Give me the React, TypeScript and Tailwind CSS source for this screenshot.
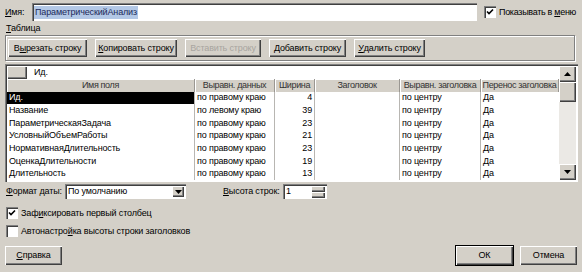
import React from "react";

const raised =
  "bg-[#d4d0c8] shadow-[inset_1px_1px_#ffffff,inset_-1px_-1px_#404040,inset_-2px_-2px_#808080]";
const sunken =
  "shadow-[inset_1px_1px_#808080,inset_2px_2px_#404040,inset_-1px_-1px_#ffffff]";

type Row = {
  name: string;
  align: string;
  width: number;
};

const rows: Row[] = [
  { name: "Ид.", align: "по правому краю", width: 4 },
  { name: "Название", align: "по левому краю", width: 39 },
  { name: "ПараметрическаяЗадача", align: "по правому краю", width: 23 },
  { name: "УсловныйОбъемРаботы", align: "по правому краю", width: 21 },
  { name: "НормативнаяДлительность", align: "по правому краю", width: 23 },
  { name: "ОценкаДлительности", align: "по правому краю", width: 19 },
  { name: "Длительность", align: "по правому краю", width: 13 },
];

function Btn({
  w,
  children,
  disabled,
  def,
  h = "h-[18px]",
}: {
  w: string;
  children: React.ReactNode;
  disabled?: boolean;
  def?: boolean;
  h?: string;
}) {
  return (
    <div
      className={`${w} ${h} ${raised} flex items-center justify-center ${
        disabled ? "text-[#a8a5a0]" : "text-black"
      } ${def ? "outline outline-1 outline-black" : ""}`}
    >
      {children}
    </div>
  );
}

function Check({ checked }: { checked?: boolean }) {
  return (
    <div className={`w-[12px] h-[12px] bg-white ${sunken} flex items-center justify-center`}>
      {checked && (
        <svg width="8" height="8" viewBox="0 0 8 8">
          <path d="M1 3.5 L3 5.5 L7 1.5" stroke="#000" strokeWidth="1.6" fill="none" />
        </svg>
      )}
    </div>
  );
}

function Arrow({ up }: { up?: boolean }) {
  return (
    <svg width="7" height="4" viewBox="0 0 7 4">
      <path d={up ? "M0 4 L3.5 0 L7 4 Z" : "M0 0 L3.5 4 L7 0 Z"} fill="#000" />
    </svg>
  );
}

const cols = "grid grid-cols-[188px_80px_40px_85px_81px_78px]";

export default function App() {
  return (
    <div
      className="w-[582px] h-[272px] bg-[#d4d0c8] text-[9px] tracking-[-0.15px] text-black overflow-hidden flex flex-col leading-none whitespace-nowrap"
      style={{ fontFamily: '"Liberation Sans", Arial, sans-serif' }}
    >
      {/* name row */}
      <div className="flex items-center h-[18px] mt-[3px] pl-[5px]">
        <span className="w-[27px]">
          <u>И</u>мя:
        </span>
        <div className={`w-[445px] h-[18px] bg-white ${sunken} flex items-center pl-[2px]`}>
          <span className="bg-[#b3c8e6] text-[#1c2a5a] px-[1px] py-[2px]">ПараметрическийАнализ</span>
        </div>
        <div className="flex items-center ml-[7px] gap-[3px]">
          <Check checked />
          <span className="tracking-[-0.3px]">
            Показывать в <u>м</u>еню
          </span>
        </div>
      </div>

      <div className="pl-[6px] mt-[2px] h-[10px] flex items-center">
        <span>
          <u>Т</u>аблица
        </span>
      </div>

      {/* toolbar group */}
      <div className="mx-[5px] w-[570px] mt-[2px] h-[26px] border border-[#808080] shadow-[1px_1px_#ffffff,inset_1px_1px_#ffffff] flex items-center pl-[2px] gap-[8px]">
        <Btn w="w-[79px]">
          В<u>ы</u>резать строку
        </Btn>
        <Btn w="w-[82px]">
          <u>К</u>опировать строку
        </Btn>
        <Btn w="w-[76px]" disabled>
          Вставить строку
        </Btn>
        <Btn w="w-[77px]">
          <u>Д</u>обавить строку
        </Btn>
        <Btn w="w-[71px]">
          <u>У</u>далить строку
        </Btn>
      </div>

      {/* grid */}
      <div className={`mx-[5px] mt-[3px] w-[573px] h-[118px] bg-white ${sunken} p-[2px] flex`}>
        <div className="flex flex-col w-[552px]">
          <div className="flex h-[13px] items-center">
            <div className={`w-[20px] h-[13px] ${raised}`} />
            <div className="pl-[7px]">Ид.</div>
          </div>
          <div className={`${cols} h-[13px]`}>
            {["Имя поля", "Выравн. данных", "Ширина", "Заголовок", "Выравн. заголовка", "Перенос заголовка"].map(
              (h) => (
                <div
                  key={h}
                  className="bg-[#d4d0c8] border-r border-[#9a9792] shadow-[inset_1px_1px_#ffffff] flex items-center justify-center text-[#333] tracking-[-0.35px] overflow-hidden"
                >
                  {h}
                </div>
              )
            )}
          </div>
          {rows.map((r, i) => (
            <div key={r.name} className={`${cols} h-[13px]`}>
              <div
                className={`pl-[2px] flex items-center border-r border-[#b8b6b2] ${
                  i === 0 ? "bg-black text-white" : ""
                }`}
              >
                {r.name}
              </div>
              <div className="pl-[2px] flex items-center border-r border-[#b8b6b2]">{r.align}</div>
              <div className="pr-[2px] flex items-center justify-end border-r border-[#b8b6b2]">{r.width}</div>
              <div className="border-r border-[#b8b6b2]" />
              <div className="pl-[2px] flex items-center border-r border-[#b8b6b2]">по центру</div>
              <div className="pl-[2px] flex items-center">Да</div>
            </div>
          ))}
        </div>
        {/* scrollbar */}
        <div className="w-[17px] bg-[#ebe9e5] flex flex-col">
          <div className={`h-[16px] ${raised} flex items-center justify-center`}>
            <Arrow up />
          </div>
          <div className={`h-[20px] ${raised}`} />
          <div className="flex-1" />
          <div className={`h-[16px] ${raised} flex items-center justify-center`}>
            <Arrow />
          </div>
        </div>
      </div>

      {/* format row */}
      <div className="flex items-center h-[15px] mt-[2px] pl-[6px]">
        <span className="w-[59px]">
          <u>Ф</u>ормат даты:
        </span>
        <div className={`w-[121px] h-[15px] bg-white ${sunken} flex items-center pl-[3px] justify-between`}>
          <span>По умолчанию</span>
          <div className={`w-[12px] h-[11px] mr-[2px] ${raised} flex items-center justify-center`}>
            <Arrow />
          </div>
        </div>
        <span className="ml-[37px] w-[60px]">
          <u>В</u>ысота строк:
        </span>
        <div className={`w-[44px] h-[15px] bg-white ${sunken} flex items-center pl-[3px] justify-between`}>
          <span>1</span>
          <div className="flex flex-col mr-[2px]">
            <div className={`w-[14px] h-[6px] ${raised}`} />
            <div className={`w-[14px] h-[6px] ${raised}`} />
          </div>
        </div>
      </div>

      <div className="flex items-center gap-[3px] pl-[6px] mt-[8px]">
        <Check checked />
        <span>
          Заф<u>и</u>ксировать первый столбец
        </span>
      </div>
      <div className="flex items-center gap-[3px] pl-[6px] mt-[6px]">
        <Check />
        <span>
          Автонастро<u>й</u>ка высоты строки заголовков
        </span>
      </div>

      {/* bottom buttons */}
      <div className="flex items-center mt-[9px] px-[5px]">
        <Btn w="w-[57px]" h="h-[19px]">
          <u>С</u>правка
        </Btn>
        <div className="flex-1" />
        <Btn w="w-[57px]" h="h-[19px]" def>
          ОК
        </Btn>
        <div className="w-[7px]" />
        <Btn w="w-[57px]" h="h-[19px]">
          Отмена
        </Btn>
      </div>
    </div>
  );
}
